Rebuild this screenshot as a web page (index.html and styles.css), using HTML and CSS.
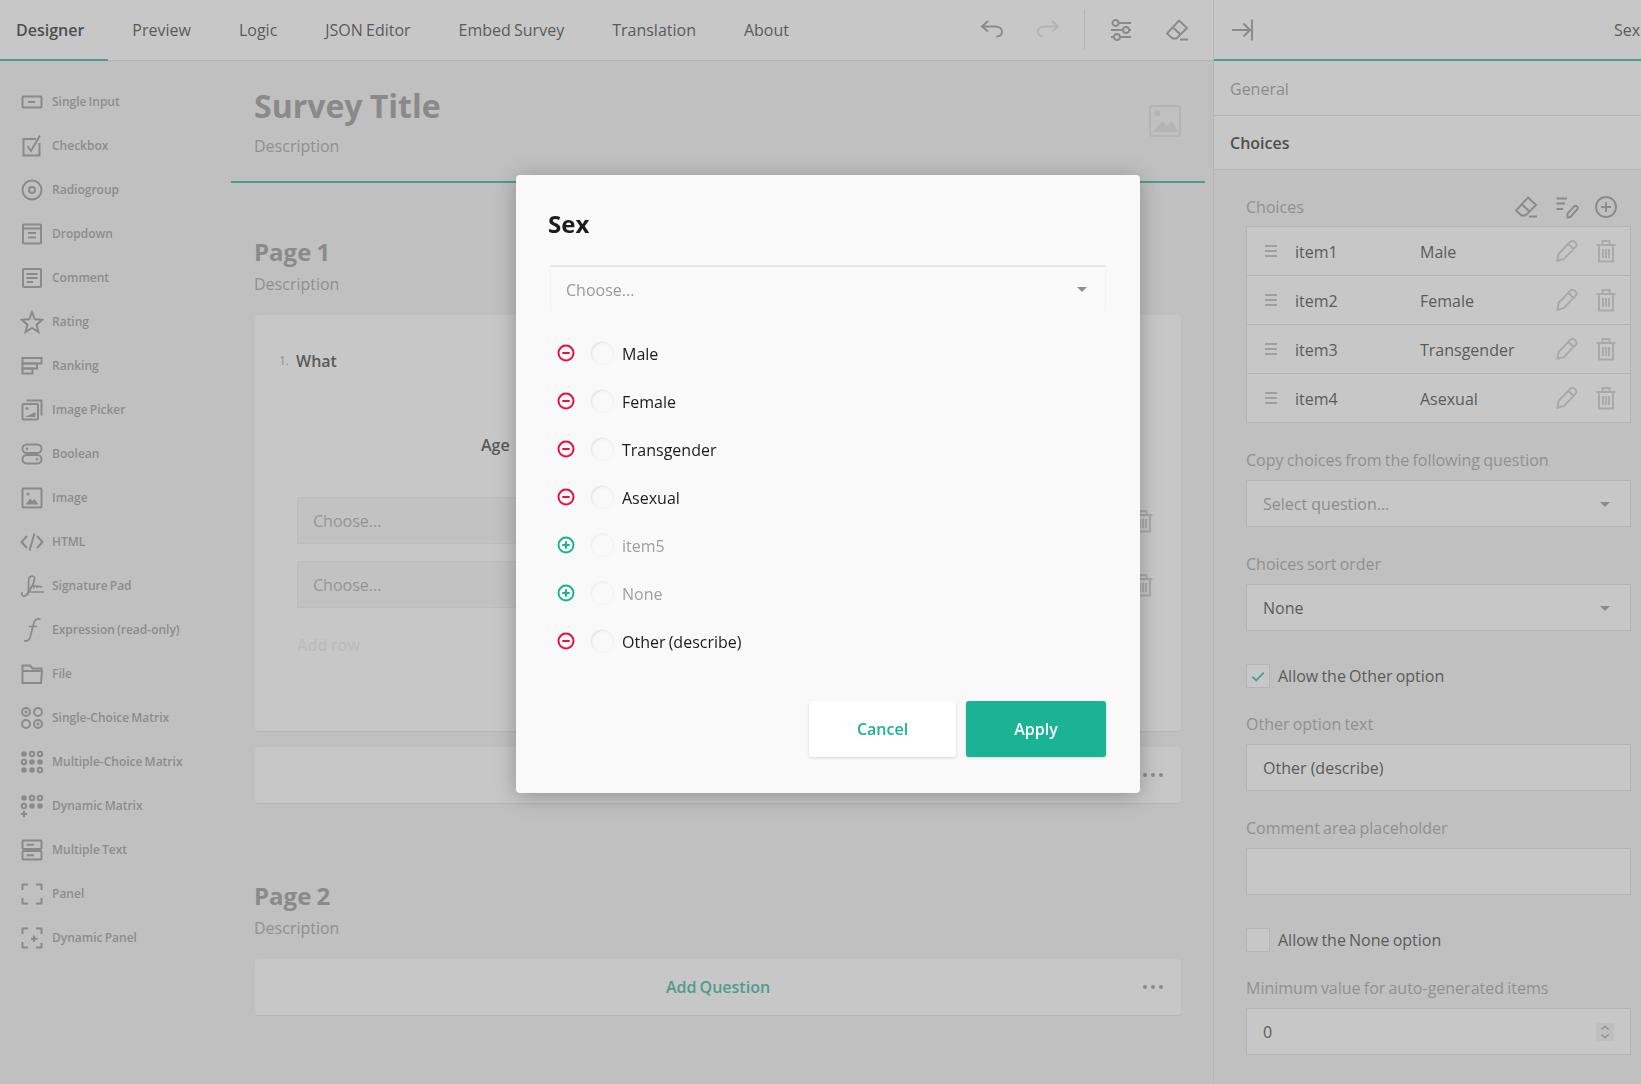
FILE: index.html
```html
<!DOCTYPE html>
<html lang="en">
<head>
<meta charset="UTF-8">
<title>Survey Creator</title>
<link rel="stylesheet" href="styles.css">
</head>
<body>

<svg class="sprite" xmlns="http://www.w3.org/2000/svg">
  <symbol id="i-eraser" viewBox="0 0 24 24"><path d="M14 2.500L22 10 11.500 20.500H7.500L2 15.500z M7.500 9L15.500 16.500 M15 21.500H23"/></symbol>
  <symbol id="i-pencil" viewBox="0 0 24 24"><path d="M2.500 22L3.500 15 15.500 2.500C17 1.500 18.500 1.500 20 3 21.500 4.500 22 6 21 7.500L9 20z M13.500 5L19 10.500"/></symbol>
  <symbol id="i-trash" viewBox="0 0 24 24"><path d="M5 6.500V22.500H19V6.500 M2.500 6H21.500 M8.500 6V2H15.500V6 M9 10V19 M12 10V19 M15 10V19"/></symbol>
  <symbol id="i-plus" viewBox="0 0 24 24"><circle cx="12" cy="12" r="10"/><path d="M12 7V17 M7 12H17"/></symbol>
  <symbol id="i-minus" viewBox="0 0 24 24"><circle cx="12" cy="12" r="10"/><path d="M7 12H17"/></symbol>
  <symbol id="i-handle" viewBox="0 0 24 24"><path d="M6 7H18 M6 12H18 M6 17H18"/></symbol>
</svg>

<div class="app">
  <div class="designer">
    <div class="topbar">
      <div class="tab active">Designer</div>
      <div class="tab">Preview</div>
      <div class="tab">Logic</div>
      <div class="tab">JSON Editor</div>
      <div class="tab">Embed Survey</div>
      <div class="tab">Translation</div>
      <div class="tab">About</div>
      <div class="tools">
        <span class="tool"><svg class="ico" viewBox="0 0 24 24"><path d="M8 3L2 8.500 8 13.500 M2.500 8.500H15C19 8.500 22 10.500 22 13.500S20 18.500 16.500 18.500"/></svg></span>
        <span class="tool off"><svg class="ico" viewBox="0 0 24 24"><path d="M16 3L22 8.500 16 13.500 M21.500 8.500H9C5 8.500 2 10.500 2 13.500S4 18.500 7.500 18.500"/></svg></span>
        <span class="tool-sep"></span>
        <span class="tool"><svg class="ico" viewBox="0 0 24 24"><path d="M9.500 5H22 M2 12H14 M19.500 12H22 M2 19H5 M11 19H22"/><circle cx="6.500" cy="5" r="3"/><circle cx="17" cy="12" r="3"/><circle cx="8" cy="19" r="3"/></svg></span>
        <span class="tool"><svg class="ico"><use href="#i-eraser"/></svg></span>
      </div>
    </div>

    <div class="workspace">
      <div class="toolbox">
        <div class="tool-item"><svg class="ico" viewBox="0 0 24 24"><rect x="2.500" y="6.500" width="19" height="11" rx="1"/><path d="M8 12H15"/></svg>Single Input</div>
        <div class="tool-item"><svg class="ico" viewBox="0 0 24 24"><path d="M19.500 9V21.500H3.500V5H16 M7.500 12L11 17 20 1.500"/></svg>Checkbox</div>
        <div class="tool-item"><svg class="ico" viewBox="0 0 24 24"><circle cx="12" cy="12" r="9.500"/><circle cx="12" cy="12" r="3"/></svg>Radiogroup</div>
        <div class="tool-item"><svg class="ico" viewBox="0 0 24 24"><rect x="3" y="2.500" width="18" height="19" rx="1"/><path d="M3 6.500H21 M8 11H16 M8 15.500H16"/></svg>Dropdown</div>
        <div class="tool-item"><svg class="ico" viewBox="0 0 24 24"><rect x="3" y="3" width="18" height="18" rx="1"/><path d="M6.500 8H17.500 M6.500 12H17.500 M6.500 16H13"/></svg>Comment</div>
        <div class="tool-item"><svg class="ico" viewBox="0 0 24 24"><path d="M12 2L14.800 9.300 22.500 9.800 16.500 14.700 18.500 22 12 18 5.500 22 7.500 14.700 1.500 9.800 9.200 9.300z"/></svg>Rating</div>
        <div class="tool-item"><svg class="ico" viewBox="0 0 24 24"><rect x="2.500" y="4" width="19" height="5.500"/><rect x="2.500" y="9.500" width="14.500" height="5"/><rect x="2.500" y="14.500" width="10" height="5"/></svg>Ranking</div>
        <div class="tool-item"><svg class="ico" viewBox="0 0 24 24"><rect x="2.500" y="6" width="15.500" height="15.500" rx="1"/><path d="M6.500 2.500H21.500V17.500"/><circle class="solid" cx="7" cy="10.500" r="1.500"/><path class="solid" d="M5 19L15.500 14V19z"/></svg>Image Picker</div>
        <div class="tool-item"><svg class="ico" viewBox="0 0 24 24"><rect x="2.500" y="2.500" width="19" height="8.500" rx="4.200"/><rect x="2.500" y="13" width="19" height="8.500" rx="4.200"/><circle class="solid" cx="7" cy="6.700" r="1.300"/><circle class="solid" cx="17" cy="17.200" r="1.300"/></svg>Boolean</div>
        <div class="tool-item"><svg class="ico" viewBox="0 0 24 24"><rect x="2.500" y="2.500" width="19" height="19" rx="1"/><circle class="solid" cx="8" cy="8" r="1.500"/><path class="solid" d="M5.500 18.500L10 12.500 12.500 15 14.500 13 18.500 18.500z"/></svg>Image</div>
        <div class="tool-item"><svg class="ico" viewBox="0 0 24 24"><path d="M7 6L1.500 12 7 18 M17 6L22.500 12 17 18 M14.500 3.500L9.500 20.500"/></svg>HTML</div>
        <div class="tool-item"><svg class="ico thin" viewBox="0 0 24 24"><path d="M2 18C1 21 3 23 5 22 9 19 15 8 14.500 4 14 1 10 2 9 4 8 8 9 16 8 21 M10 14C12 12 13 10 14 13 15 11 16 11 17 13 18 12 19 12 22 13 M8 18H24"/></svg>Signature Pad</div>
        <div class="tool-item"><svg class="ico thin" viewBox="0 0 24 24"><path d="M20.500 1.500C17 0 14.500 1.500 13.500 6L10.500 18C9.500 22.500 7 24 4 22.500 M9 8.500H17"/></svg>Expression (read-only)</div>
        <div class="tool-item"><svg class="ico" viewBox="0 0 24 24"><path d="M2.500 21V3.500H10L12.500 6.500H21.500V9 M2.500 9H22L21 21H2.500z"/></svg>File</div>
        <div class="tool-item"><svg class="ico" viewBox="0 0 24 24"><circle cx="6" cy="6" r="4"/><circle cx="18" cy="6" r="4"/><circle cx="6" cy="18" r="4"/><circle cx="18" cy="18" r="4"/><circle class="solid" cx="6" cy="6" r="1.500"/><circle class="solid" cx="18" cy="18" r="1.500"/></svg>Single-Choice Matrix</div>
        <div class="tool-item"><svg class="ico" viewBox="0 0 24 24"><circle class="solid" cx="4" cy="4" r="2.800"/><circle cx="12" cy="4" r="2.200"/><circle cx="20" cy="4" r="2.200"/><circle cx="4" cy="12" r="2.200"/><circle class="solid" cx="12" cy="12" r="2.800"/><circle class="solid" cx="20" cy="12" r="2.800"/><circle class="solid" cx="4" cy="20" r="2.800"/><circle class="solid" cx="12" cy="20" r="2.800"/><circle cx="20" cy="20" r="2.200"/></svg>Multiple-Choice Matrix</div>
        <div class="tool-item"><svg class="ico" viewBox="0 0 24 24"><circle class="solid" cx="4" cy="4" r="2.800"/><circle cx="12" cy="4" r="2.200"/><circle cx="20" cy="4" r="2.200"/><circle cx="4" cy="12" r="2.200"/><circle class="solid" cx="12" cy="12" r="2.800"/><circle class="solid" cx="20" cy="12" r="2.800"/><path d="M4 17V23 M1 20H7"/></svg>Dynamic Matrix</div>
        <div class="tool-item"><svg class="ico" viewBox="0 0 24 24"><rect x="2.500" y="2.500" width="19" height="8.500" rx="1"/><rect x="2.500" y="13" width="19" height="8.500" rx="1"/><path d="M6.500 6.700H14 M6.500 17.200H14"/></svg>Multiple Text</div>
        <div class="tool-item"><svg class="ico" viewBox="0 0 24 24"><path d="M2.500 8V2.500H8 M16 2.500H21.500V8 M21.500 16V21.500H16 M8 21.500H2.500V16"/></svg>Panel</div>
        <div class="tool-item"><svg class="ico" viewBox="0 0 24 24"><path d="M2.500 8V2.500H8 M16 2.500H21.500V8 M21.500 17V21.500H16 M8 21.500H2.500V16 M14 9.500V16 M11 12.700H17.500"/></svg>Dynamic Panel</div>
      </div>

      <div class="survey">
        <div class="survey-head">
          <div>
            <div class="survey-title">Survey Title</div>
            <div class="desc">Description</div>
          </div>
          <svg class="logo-ico" viewBox="0 0 32 32"><rect x="1" y="1" width="30" height="30" rx="2"/><circle cx="8.500" cy="8.500" r="3"/><path d="M4 27L13 16 18 21 23 16 29 27z"/></svg>
        </div>

        <div class="page">
          <div class="page-title">Page 1</div>
          <div class="desc">Description</div>
          <div class="card question">
            <div class="q-title"><span class="q-num">1.</span>What</div>
            <div class="col-head">Age</div>
            <div class="q-row">
              <div class="q-select">Choose...</div>
              <svg class="ico faint"><use href="#i-trash"/></svg>
            </div>
            <div class="q-row">
              <div class="q-select">Choose...</div>
              <svg class="ico faint"><use href="#i-trash"/></svg>
            </div>
            <div class="add-row">Add row</div>
          </div>
          <div class="card add-card">
            Add Question
            <span class="dots"><i></i><i></i><i></i></span>
          </div>
        </div>

        <div class="page page-two">
          <div class="page-title">Page 2</div>
          <div class="desc">Description</div>
          <div class="card add-card">
            Add Question
            <span class="dots"><i></i><i></i><i></i></span>
          </div>
        </div>
      </div>
    </div>
  </div>

  <div class="props">
    <div class="props-head">
      <svg class="ico" viewBox="0 0 24 24"><path d="M2 12H19.500 M13.500 5.500L20 12 13.500 18.500 M22 1.500V22.500"/></svg>
      <span class="props-name">Sex</span>
    </div>
    <div class="section">General</div>
    <div class="section current">Choices</div>

    <div class="form">
      <div class="choices-head">
        <span class="label">Choices</span>
        <svg class="ico"><use href="#i-eraser"/></svg>
        <svg class="ico" viewBox="0 0 24 24"><path d="M1.500 3.500H12 M1.500 8.500H10 M1.500 14H8 M12.500 22.500V18.500L19.500 11C21 10 23.500 12 22.500 14L15.500 22z"/></svg>
        <svg class="ico"><use href="#i-plus"/></svg>
      </div>
      <div class="choice-list">
        <div class="choice">
          <svg class="ico handle"><use href="#i-handle"/></svg><span>item1</span><span>Male</span>
          <svg class="ico faint"><use href="#i-pencil"/></svg><svg class="ico faint"><use href="#i-trash"/></svg>
        </div>
        <div class="choice">
          <svg class="ico handle"><use href="#i-handle"/></svg><span>item2</span><span>Female</span>
          <svg class="ico faint"><use href="#i-pencil"/></svg><svg class="ico faint"><use href="#i-trash"/></svg>
        </div>
        <div class="choice">
          <svg class="ico handle"><use href="#i-handle"/></svg><span>item3</span><span>Transgender</span>
          <svg class="ico faint"><use href="#i-pencil"/></svg><svg class="ico faint"><use href="#i-trash"/></svg>
        </div>
        <div class="choice">
          <svg class="ico handle"><use href="#i-handle"/></svg><span>item4</span><span>Asexual</span>
          <svg class="ico faint"><use href="#i-pencil"/></svg><svg class="ico faint"><use href="#i-trash"/></svg>
        </div>
      </div>

      <div class="field">
        <div class="label">Copy choices from the following question</div>
        <div class="box muted">Select question...<span class="arrow"></span></div>
      </div>
      <div class="field">
        <div class="label">Choices sort order</div>
        <div class="box">None<span class="arrow"></span></div>
      </div>
      <div class="check-row">
        <span class="check-box"><svg class="check-mark" viewBox="0 0 16 12"><path d="M1.500 6L6 10.500 14.500 1.500"/></svg></span>
        Allow the Other option
      </div>
      <div class="field">
        <div class="label">Other option text</div>
        <div class="box">Other (describe)</div>
      </div>
      <div class="field">
        <div class="label">Comment area placeholder</div>
        <div class="box"></div>
      </div>
      <div class="check-row">
        <span class="check-box"></span>
        Allow the None option
      </div>
      <div class="field">
        <div class="label">Minimum value for auto-generated items</div>
        <div class="box">0
          <span class="spinner"><svg viewBox="0 0 18 18"><path d="M5.500 6.500L9 3 12.500 6.500 M5.500 11.500L9 15 12.500 11.500"/></svg></span>
        </div>
      </div>
    </div>
  </div>
</div>

<div class="overlay">
  <div class="modal">
    <div class="modal-title">Sex</div>
    <div class="modal-select">Choose...<span class="arrow"></span></div>
    <div class="options">
      <div class="option"><svg class="ico remove"><use href="#i-minus"/></svg><span class="radio"></span>Male</div>
      <div class="option"><svg class="ico remove"><use href="#i-minus"/></svg><span class="radio"></span>Female</div>
      <div class="option"><svg class="ico remove"><use href="#i-minus"/></svg><span class="radio"></span>Transgender</div>
      <div class="option"><svg class="ico remove"><use href="#i-minus"/></svg><span class="radio"></span>Asexual</div>
      <div class="option disabled"><svg class="ico add"><use href="#i-plus"/></svg><span class="radio"></span>item5</div>
      <div class="option disabled"><svg class="ico add"><use href="#i-plus"/></svg><span class="radio"></span>None</div>
      <div class="option"><svg class="ico remove"><use href="#i-minus"/></svg><span class="radio"></span>Other (describe)</div>
    </div>
    <div class="modal-actions">
      <button class="btn btn-cancel">Cancel</button>
      <button class="btn btn-apply">Apply</button>
    </div>
  </div>
</div>

</body>
</html>
```

FILE: styles.css
```css
body {
  font-family: "Open Sans", sans-serif;
  font-size: 16px;
  line-height: 22px;
  word-spacing: -1px;
  margin: 0;
  padding: 0;
  height: 1084px;
  overflow: hidden;
  background-color: #f2f2f2;
  color: #363636;
}
.sprite {
  display: none;
}
.ico {
  width: 24px;
  height: 24px;
  flex: none;
  fill: none;
  stroke: currentColor;
  stroke-width: 1.9;
  color: #8f8f8f;
}
.ico .solid {
  fill: currentColor;
  stroke: none;
}
.ico.faint {
  color: #c8c8c8;
}
.app {
  display: flex;
  height: 1084px;
}
.designer {
  width: 1213px;
  flex: none;
}

/* top bar */
.topbar {
  display: flex;
  height: 60px;
  background-color: #fff;
  border-bottom: 1px solid #dedede;
}
.tab {
  padding: 0 24px;
  line-height: 60px;
  height: 60px;
}
.tab.active {
  padding-left: 16px;
  font-weight: 600;
  color: #1c1c1c;
  border-bottom: 2px solid #1ab394;
  height: 59px;
  margin-bottom: -1px;
}
.tools {
  display: flex;
  align-items: center;
  margin-left: auto;
  padding-right: 8px;
}
.tool {
  display: flex;
  justify-content: center;
  width: 56px;
}
.tool.off .ico {
  color: #dcdcdc;
}
.tool-sep {
  width: 1px;
  height: 40px;
  margin: 0 8px;
  background-color: #dedede;
}

/* left tools */
.workspace {
  display: flex;
}
.toolbox {
  width: 211px;
  flex: none;
  padding: 19px 0 0 20px;
}
.tool-item {
  display: flex;
  align-items: center;
  gap: 8px;
  height: 44px;
  font-size: 12px;
  font-weight: 600;
  color: #929292;
}
.tool-item .ico {
  stroke-width: 2;
}
.tool-item .ico.thin {
  stroke-width: 1.7;
}

/* survey */
.survey {
  width: 974px;
  flex: none;
}
.survey-head {
  display: flex;
  justify-content: space-between;
  align-items: flex-start;
  height: 97px;
  padding: 23px 24px 0 23px;
  border-bottom: 2px solid #1ab394;
}
.survey-title {
  font-size: 32px;
  line-height: 43px;
  font-weight: 700;
  color: #8e8e8e;
  margin-bottom: 8px;
}
.logo-ico {
  width: 32px;
  height: 32px;
  margin-top: 21px;
  fill: none;
  stroke: #dcdcdc;
  stroke-width: 2;
}
.logo-ico circle, .logo-ico path {
  fill: #dcdcdc;
  stroke: none;
}
.desc {
  color: #9a9a9a;
}
.page {
  padding: 0 24px;
  margin-top: 53px;
}
.page-two {
  margin-top: 77px;
}
.page > .page-title, .page > .desc {
  margin-left: -1px;
}
.page-title {
  font-size: 24px;
  line-height: 32px;
  font-weight: 700;
  color: #8e8e8e;
  margin-bottom: 5px;
}
.card {
  background-color: #fff;
  border-radius: 4px;
  box-shadow: 0 1px 1px rgba(0, 0, 0, 0.08);
  margin-top: 20px;
}
.question {
  height: 416px;
  box-sizing: border-box;
  padding: 35px 26px 0 42px;
}
.q-title {
  position: relative;
  left: -1px;
  font-weight: 600;
}
.q-num {
  position: absolute;
  left: -17px;
  font-size: 12px;
  font-weight: 400;
  color: #9a9a9a;
}
.col-head {
  margin: 62px 0 41px 184px;
  font-weight: 600;
}
.q-row {
  display: flex;
  align-items: center;
  justify-content: space-between;
  margin-bottom: 17px;
}
.q-select {
  width: 823px;
  height: 47px;
  line-height: 47px;
  box-sizing: border-box;
  padding-left: 15px;
  border-radius: 2px;
  background-color: #f5f5f5;
  border: 1px solid #ebebeb;
  color: #a3a3a3;
}
.add-row {
  margin-top: 26px;
  font-weight: 600;
  color: #eaeaea;
}
.add-card {
  position: relative;
  height: 56px;
  line-height: 56px;
  text-align: center;
  font-weight: 600;
  color: #1ab394;
}
.question + .add-card {
  margin-top: 16px;
}
.dots {
  position: absolute;
  right: 18px;
  top: 26px;
  display: flex;
  gap: 4px;
}
.dots i {
  width: 4px;
  height: 4px;
  border-radius: 50%;
  background-color: #8f8f8f;
}

/* right panel */
.props {
  flex: 1;
  min-width: 0;
  border-left: 1px solid #dedede;
  background-color: #f2f2f2;
  overflow: hidden;
}
.props-head {
  display: flex;
  align-items: center;
  height: 59px;
  padding-left: 16px;
  background-color: #fff;
  border-bottom: 2px solid #1ab394;
}
.props-name {
  margin-left: 360px;
  white-space: nowrap;
}
.section {
  height: 54px;
  line-height: 56px;
  padding-left: 16px;
  background-color: #fff;
  border-bottom: 1px solid #dedede;
  color: #929292;
}
.section.current {
  height: 53px;
  line-height: 54px;
  font-weight: 600;
  color: #1c1c1c;
}
.form {
  padding: 0 10px 0 32px;
}
.label {
  color: #9a9a9a;
}
.choices-head {
  display: flex;
  align-items: center;
  margin-top: 26px;
  height: 22px;
  margin-bottom: 8px;
}
.choices-head .label {
  margin-right: auto;
}
.choices-head .ico {
  margin-right: 17px;
}
.choices-head .ico:nth-child(3) {
  margin-right: 15px;
}
.choices-head .ico:last-child {
  margin-right: 13px;
}
.choice-list {
  background-color: #fff;
  border: 1px solid #dedede;
  box-sizing: border-box;
  height: 197px;
}
.choice {
  display: grid;
  grid-template-columns: 48px 125px 1fr 24px 24px;
  align-items: center;
  height: 48px;
  border-bottom: 1px solid #dedede;
}
.choice:last-child {
  border-bottom: none;
}
.choice span {
  padding-top: 2px;
}
.choice .ico.handle {
  margin-left: 12px;
  color: #b5b5b5;
}
.choice .ico:last-child {
  margin-left: -12px;
  grid-column: 5;
}
.choice .ico:nth-last-child(2) {
  margin-left: -27px;
}
.field {
  margin-top: 26px;
}
.check-row + .field {
  margin-top: 25px;
}
.field .label {
  margin-bottom: 9px;
}
.box {
  position: relative;
  height: 47px;
  line-height: 47px;
  box-sizing: border-box;
  padding-left: 16px;
  word-spacing: 0;
  background-color: #fff;
  border: 1px solid #dedede;
}
.box.muted {
  color: #929292;
}
.arrow {
  position: absolute;
  right: 20px;
  top: 21px;
  width: 0;
  height: 0;
  border-left: 5px solid transparent;
  border-right: 5px solid transparent;
  border-top: 5px solid #8f8f8f;
}
.check-row {
  display: flex;
  align-items: center;
  gap: 8px;
  margin-top: 33px;
  height: 24px;
}
.check-box {
  display: flex;
  align-items: center;
  justify-content: center;
  width: 24px;
  height: 24px;
  box-sizing: border-box;
  background-color: #fff;
  border: 1px solid #dedede;
}
.check-mark {
  width: 14px;
  height: 11px;
  fill: none;
  stroke: #1ab394;
  stroke-width: 2;
}
.spinner {
  position: absolute;
  right: 16px;
  top: 14px;
  width: 18px;
  height: 18px;
  background-color: #f0f0f0;
}
.spinner svg {
  display: block;
  fill: none;
  stroke: #8f8f8f;
  stroke-width: 1.2;
}

/* dialog */
.overlay {
  position: fixed;
  left: 0;
  top: 0;
  right: 0;
  bottom: 0;
  background-color: rgba(132, 132, 132, 0.46);
}
.modal {
  position: absolute;
  left: 516px;
  top: 175px;
  width: 624px;
  height: 618px;
  box-sizing: border-box;
  padding: 33px 34px 36px 32px;
  background-color: #f9f9f9;
  border-radius: 4px;
  box-shadow: 0 3px 22px rgba(0, 0, 0, 0.28);
  color: #1c1c1c;
}
.modal-title {
  font-size: 24px;
  line-height: 32px;
  font-weight: 700;
}
.modal-select {
  position: relative;
  height: 47px;
  line-height: 47px;
  box-sizing: border-box;
  margin: 25px 0 18px 2px;
  padding-left: 15px;
  border: 1px solid #f3f3f3;
  border-top: 2px solid #e6e6e6;
  border-bottom-color: #f7f7f7;
  border-radius: 2px;
  color: #9a9a9a;
}
.modal-select .arrow {
  right: 18px;
  top: 20px;
}
.option {
  display: flex;
  align-items: center;
  height: 48px;
  padding-left: 9px;
}
.option .ico {
  width: 18px;
  height: 18px;
  margin-bottom: 2px;
  stroke-width: 2.6;
}
.ico.remove {
  color: #e8103f;
}
.ico.add {
  color: #1ab394;
}
.radio {
  width: 24px;
  height: 24px;
  box-sizing: border-box;
  margin: 0 8px 2px 15px;
  border-radius: 50%;
  border: 1px solid #f2f2f2;
  box-shadow: inset 1px 1px 2px rgba(0, 0, 0, 0.1);
}
.option.disabled {
  color: #a0a0a0;
}
.option.disabled .radio {
  box-shadow: inset 1px 1px 1px rgba(0, 0, 0, 0.04);
}
.modal-actions {
  display: flex;
  justify-content: flex-end;
  gap: 10px;
  margin-top: 35px;
}
.btn {
  height: 56px;
  font-family: inherit;
  font-size: 16px;
  font-weight: 600;
  border: none;
  border-radius: 3px;
  box-shadow: 0 1px 3px rgba(0, 0, 0, 0.15);
}
.btn-cancel {
  width: 147px;
  background-color: #fff;
  color: #1ab394;
}
.btn-apply {
  width: 140px;
  background-color: #1ab394;
  color: #fff;
}
```
